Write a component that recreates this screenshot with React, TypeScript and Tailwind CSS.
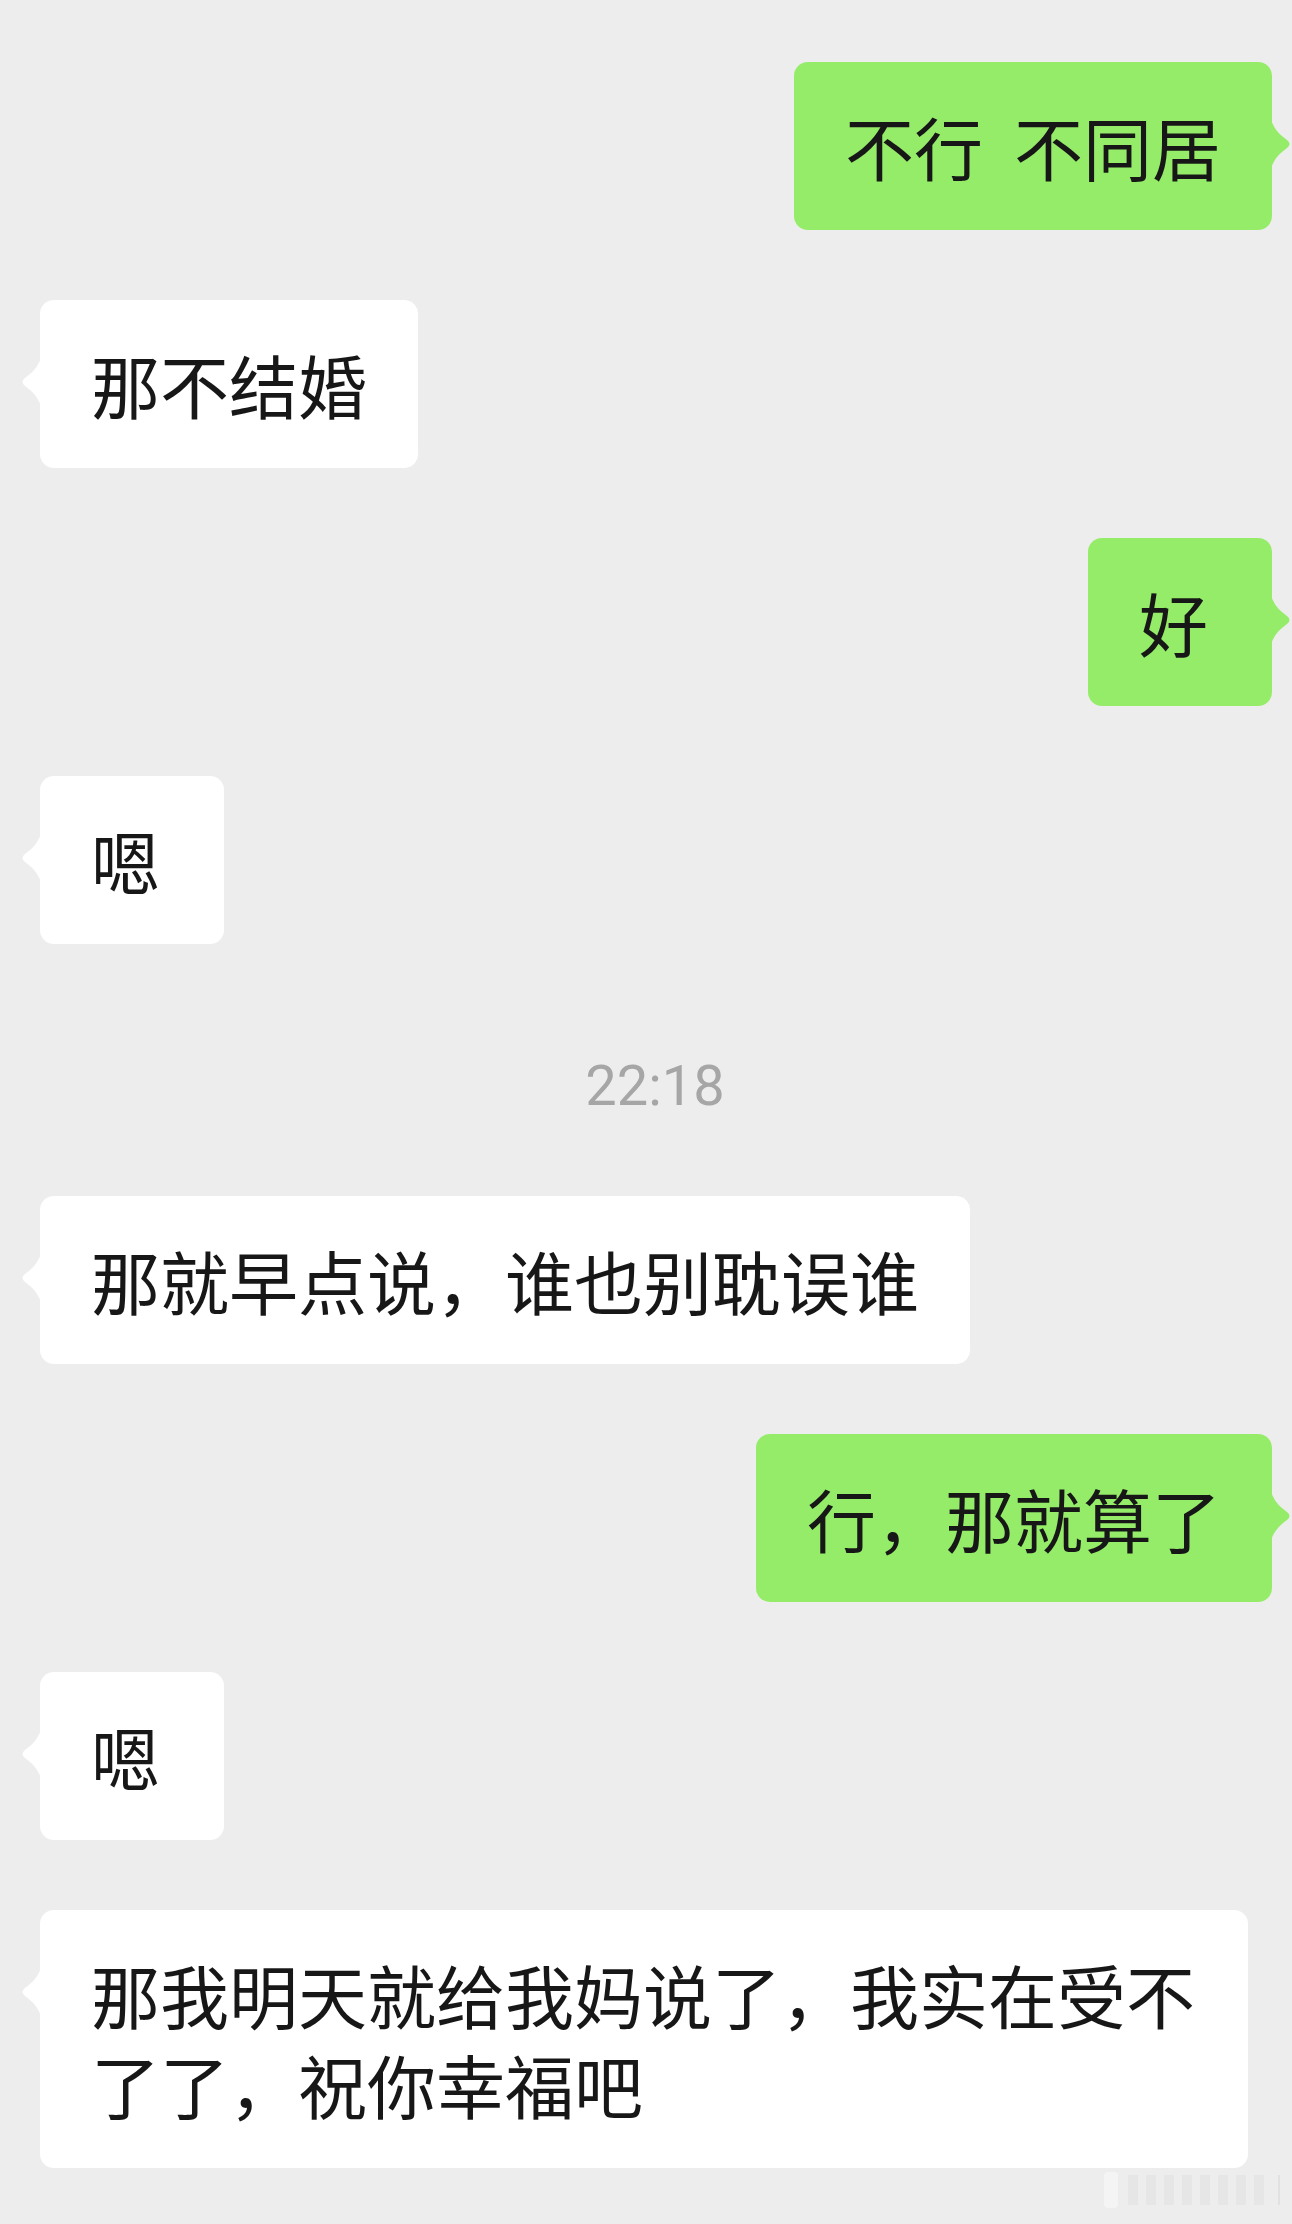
import React from "react";

type Msg =
    | { kind: "in" | "out"; text: string }
    | { kind: "time"; text: string };

const messages: Msg[] = [
    { kind: "out", text: "不行  不同居" },
    { kind: "in", text: "那不结婚" },
    { kind: "out", text: "好" },
    { kind: "in", text: "嗯" },
    { kind: "time", text: "22:18" },
    { kind: "in", text: "那就早点说，谁也别耽误谁" },
    { kind: "out", text: "行，那就算了" },
    { kind: "in", text: "嗯" },
    { kind: "in", text: "那我明天就给我妈说了，我实在受不了了，祝你幸福吧" },
];

function Tail({ side }: { side: "left" | "right" }) {
    // little concave arrow on the bubble edge
    if (side === "right") {
        return (
            <svg className="absolute top-[58px] -right-[20px] w-[21px] h-[48px]" viewBox="0 0 21 48">
                <path d="M0 0 C4 10 8 14 16 20 Q21 24 16 28 C8 34 4 38 0 48 Z" fill="#95ec69" />
            </svg>
        );
    }
    return (
        <svg className="absolute top-[58px] -left-[20px] w-[21px] h-[48px]" viewBox="0 0 21 48">
            <path d="M21 0 C17 10 13 14 5 20 Q0 24 5 28 C13 34 17 38 21 48 Z" fill="#ffffff" />
        </svg>
    );
}

function Bubble({ kind, text }: { kind: "in" | "out"; text: string }) {
    const out = kind === "out";
    return (
        <div className={out ? "flex justify-end pr-[20px]" : "flex justify-start pl-[40px]"}>
            <div
                className={
                    "relative rounded-[14px] px-[51px] py-[39px] min-w-[184px] max-w-[1208px] text-[69px] leading-[90px] text-[#171717] whitespace-pre-wrap " +
                    (out ? "bg-[#95ec69]" : "bg-white")
                }
            >
                {text}
                <Tail side={out ? "right" : "left"} />
            </div>
        </div>
    );
}

export default function App() {
    return (
        <div className="min-h-[2224px] w-full bg-[#ededed] font-['Noto_Sans_CJK_SC',sans-serif] overflow-hidden">
            <div className="flex flex-col gap-[70px] pt-[62px]">
                {messages.map((m, i) =>
                    m.kind === "time" ? (
                        <div key={i} className="flex justify-center pl-[18px] pt-[40px] pb-[8px] text-[56px] leading-[64px] text-[#a6a6a6] font-['Roboto',sans-serif]">
                            {m.text}
                        </div>
                    ) : (
                        <Bubble key={i} kind={m.kind} text={m.text} />
                    )
                )}
            </div>

            {/* faint watermark, bottom right */}
            <div className="flex justify-end items-center gap-[10px] pr-[12px] pt-[4px] opacity-60">
                <div className="w-[14px] h-[36px] rounded-[4px] bg-[#fafafa]" />
                <div className="flex gap-[8px]">
                    {[0, 1, 2, 3, 4, 5, 6, 7].map((k) => (
                        <div key={k} className="w-[10px] h-[30px] bg-[#e2e2e2]" />
                    ))}
                </div>
                <div className="w-[6px] h-[30px] border-r-2 border-[#d8d8d8]" />
            </div>
        </div>
    );
}
